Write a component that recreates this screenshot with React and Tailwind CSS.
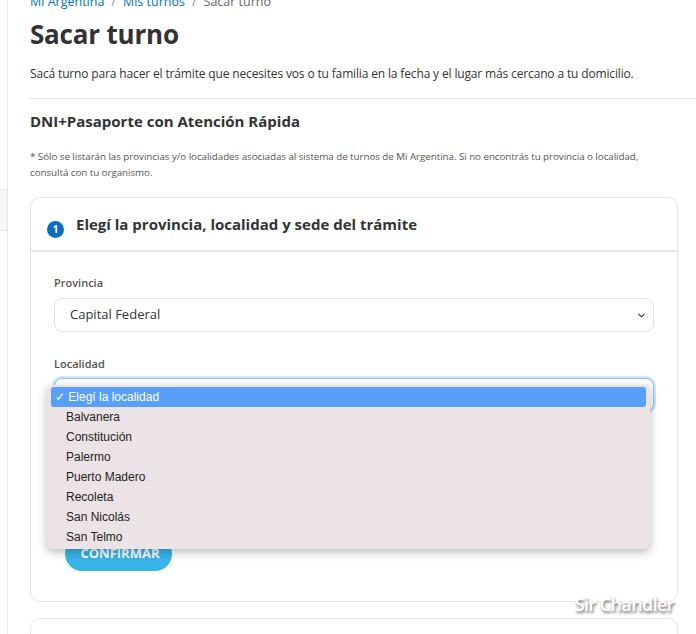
import { ChevronDown } from 'lucide-react';

const localidades = ['Balvanera', 'Constitución', 'Palermo', 'Puerto Madero', 'Recoleta', 'San Nicolás', 'San Telmo'];

function SelectBox({ value, focused }) {
  return (
    <div
      className={
        'flex h-[34px] items-center justify-between rounded-[8px] border bg-white pl-[15px] pr-[6px] text-[13px] text-[#333] ' +
        (focused ? 'border-[#8ec3f0] shadow-[0_0_0_2px_rgba(120,180,240,0.35)]' : 'border-[#e2e2e2]')
      }
    >
      <span>{value}</span>
      <ChevronDown size={11} strokeWidth={3} className="text-[#444]" />
    </div>
  );
}

export default function App() {
  return (
    <div className="relative flex h-[634px] w-[696px] overflow-hidden bg-white font-['Open_Sans',sans-serif] text-[#333]">
      {/* sidebar edge */}
      <aside className="w-[8px] shrink-0 border-r border-[#e8e8e8]">
        <div className="mt-[189px] h-[42px] border-y border-[#e6e6e6] bg-[#f7f7f7]" />
      </aside>

      <main className="flex-1 pl-[22px]">
        <nav className="-mt-[6px] flex gap-[7px] text-[12.5px] leading-[16px]">
          <span className="text-[#0072bb]">Mi Argentina</span>
          <span className="text-[#888]">/</span>
          <span className="text-[#0072bb]">Mis turnos</span>
          <span className="text-[#888]">/</span>
          <span className="text-[#666]">Sacar turno</span>
        </nav>

        <h1 className="mt-[7px] text-[26px] font-bold leading-[34px] tracking-[-0.2px] text-[#333]">Sacar turno</h1>
        <p className="mt-[14px] text-[12px] leading-[18px] tracking-[-0.15px] text-[#333]">
          Sacá turno para hacer el trámite que necesites vos o tu familia en la fecha y el lugar más cercano a tu domicilio.
        </p>
        <hr className="mt-[15px] border-[#e4e4e4]" />

        <h2 className="mt-[10px] text-[15px] font-bold leading-[24px] text-[#333]">DNI+Pasaporte con Atención Rápida</h2>
        <p className="mt-[16px] pr-[30px] text-[9.8px] leading-[16px] tracking-[-0.05px] text-[#555]">
          * Sólo se listarán las provincias y/o localidades asociadas al sistema de turnos de Mi Argentina. Si no encontrás tu provincia o localidad, consultá con tu organismo.
        </p>

        <section className="relative mr-[18px] mt-[16px] rounded-[10px] border border-[#e6e6e6]">
          <div className="flex items-start gap-[12px] border-b-2 border-[#e4e4e4] px-[16px] pb-[12px] pt-[14px]">
            <span className="mt-[9px] flex h-[17px] w-[17px] items-center justify-center rounded-full bg-[#0a6ec0] text-[10px] font-bold text-white">1</span>
            <h3 className="text-[15px] font-bold leading-[24px] text-[#333]">Elegí la provincia, localidad y sede del trámite</h3>
          </div>

          <div className="px-[23px] pb-[30px] pt-[23px]">
            <label className="block text-[11px] font-semibold leading-[16px] text-[#555]">Provincia</label>
            <div className="mt-[7px]">
              <SelectBox value="Capital Federal" />
            </div>

            <label className="mt-[24px] block text-[11px] font-semibold leading-[16px] text-[#555]">Localidad</label>
            <div className="mt-[6px]">
              <SelectBox value="Elegí la localidad" focused />
            </div>

            <div className="h-[125px]" />

            <button className="ml-[11px] h-[34px] w-[107px] rounded-full bg-[#39b4e8] pl-[3px] text-[13px] font-bold text-white">CONFIRMAR</button>
          </div>

          {/* open native select menu */}
          <ul className="absolute left-[16px] top-[187px] w-[603px] rounded-[6px] bg-[#ece3e6] px-[4px] py-[2px] font-['Liberation_Sans',Arial,sans-serif] text-[12px] leading-[20px] text-[#222] shadow-[0_3px_10px_rgba(0,0,0,0.28)]">
            <li className="rounded-[3px] bg-[#579ffa] pl-[4px] text-white">✓ Elegí la localidad</li>
            {localidades.map((l) => (
              <li key={l} className="pl-[15px]">{l}</li>
            ))}
          </ul>
        </section>

        <section className="mr-[18px] mt-[16px] h-[40px] rounded-[10px] border border-[#e6e6e6]" />
      </main>

      <span className="absolute bottom-[16px] right-[22px] font-['Open_Sans',sans-serif] text-[18px] font-semibold tracking-[-0.6px] text-white [text-shadow:1px_2px_3px_rgba(0,0,0,0.6)]">
        Sir Chandler
      </span>
    </div>
  );
}
